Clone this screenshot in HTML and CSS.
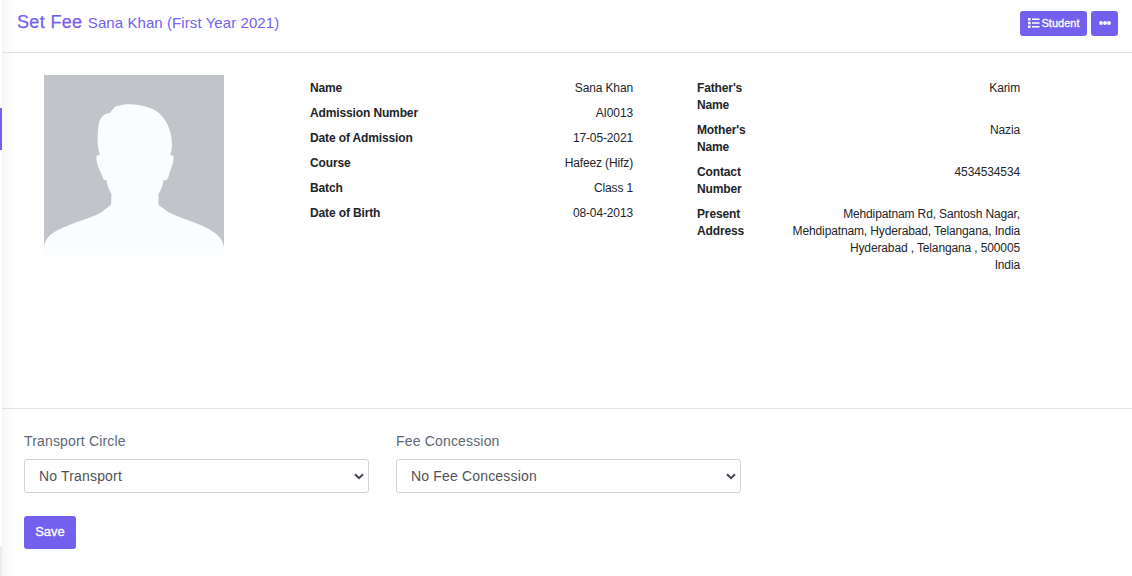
FILE: index.html
```html
<!DOCTYPE html>
<html lang="en">
<head>
<meta charset="utf-8">
<title>Set Fee</title>
<link rel="stylesheet" href="styles.css">
</head>
<body>
<div class="layout">
  <aside class="rail"><div class="rail-active"></div><div class="rail-foot"></div></aside>
  <main class="page">
    <header class="page-header">
      <h1 class="title">Set Fee <small class="subtitle">Sana Khan (First Year 2021)</small></h1>
      <div class="actions">
        <button class="btn btn-sm btn-student"><svg class="icon-list" viewBox="0 0 12 10"><path fill="#fff" d="M0 0h2.600v2.400H0zM0 3.800h2.600v2.400H0zM0 7.600h2.600v2.400H0zM4 .4h7.500v1.600H4zM4 4.200h7.500v1.600H4zM4 8h7.500v1.600H4z"/></svg><span>Student</span></button>
        <button class="btn btn-sm btn-more" aria-label="More"><svg class="icon-dots" viewBox="0 0 12 4"><circle cx="2" cy="2" r="1.9" fill="#fff"/><circle cx="6" cy="2" r="1.9" fill="#fff"/><circle cx="10" cy="2" r="1.9" fill="#fff"/></svg></button>
      </div>
    </header>
    <section class="profile">
      <svg class="avatar" viewBox="0 0 180 180">
        <rect width="180" height="180" fill="#c1c5ca"/>
        <path fill="#fbfcfe" d="M0 180V172C1 164 6 159 14 155C30 147 48 143 58 137C61 134 64 132 67 130L67.500 119C65 115 63 110 62.500 105C60 106 58.500 103 57.500 99C55 94 52 88 52.500 82C52.500 80 54 80 56 80C53 72 53 58 55 48C56 43 60 38 66 38C69 34 72 30 75 31C80 28 96 29 106 33C120 38 128 53 128 70C128 74 127 78 126 80C129 80 130 81 129.500 85C129 90 126 95 125 100C124 104 123 106 119.500 105C119 110 117 115 114.500 119L114.500 130C118 132 121 135 124 137C138 144 158 149 168 156C176 161 179 166 180 172V180Z"/>
      </svg>
      <dl class="details details-student">
        <div class="row"><dt>Name</dt><dd>Sana Khan</dd></div>
        <div class="row"><dt>Admission Number</dt><dd>AI0013</dd></div>
        <div class="row"><dt>Date of Admission</dt><dd>17-05-2021</dd></div>
        <div class="row"><dt>Course</dt><dd>Hafeez (Hifz)</dd></div>
        <div class="row"><dt>Batch</dt><dd>Class 1</dd></div>
        <div class="row"><dt>Date of Birth</dt><dd>08-04-2013</dd></div>
      </dl>
      <dl class="details">
        <div class="row"><dt>Father's<br>Name</dt><dd>Karim</dd></div>
        <div class="row"><dt>Mother's<br>Name</dt><dd>Nazia</dd></div>
        <div class="row"><dt>Contact<br>Number</dt><dd>4534534534</dd></div>
        <div class="row"><dt>Present<br>Address</dt><dd>Mehdipatnam Rd, Santosh Nagar,<br>Mehdipatnam, Hyderabad, Telangana, India<br>Hyderabad , Telangana , 500005<br>India</dd></div>
      </dl>
    </section>
    <form class="fee-form">
      <div class="fields">
        <label class="field"><span>Transport Circle</span>
          <span class="select"><span>No Transport</span><svg class="chevron" viewBox="0 0 10 7"><path d="M1 1.200L5 5.200L9 1.200" fill="none" stroke="#40474f" stroke-width="2"/></svg></span></label>
        <label class="field"><span>Fee Concession</span>
          <span class="select"><span>No Fee Concession</span><svg class="chevron" viewBox="0 0 10 7"><path d="M1 1.200L5 5.200L9 1.200" fill="none" stroke="#40474f" stroke-width="2"/></svg></span></label>
      </div>
      <button class="btn btn-save" type="button">Save</button>
    </form>
  </main>
</div>
</body>
</html>
```
FILE: styles.css
```css
* { box-sizing: border-box; }
body { margin: 0; background: #fff; color: #212529; font: 12px/17px "Liberation Sans", Arial, sans-serif; overflow: hidden; }
.layout { display: flex; height: 576px; }
.rail { width: 2px; display: flex; flex-direction: column; justify-content: space-between; padding-top: 108px; }
.rail-active { height: 42px; background: #7460ee; }
.rail-foot { height: 30px; background: #e9edf2; }
.page { flex: 1; background: linear-gradient(to right, #f7f7f7, #fff 14px); }
.page-header { height: 53px; padding: 11px 14px 0 15px; display: flex; justify-content: space-between; align-items: flex-start; border-bottom: 1px solid #dee0e2; }
.title { margin: 0; font-size: 18px; line-height: 22px; font-weight: 400; letter-spacing: .35px; color: #7460ee; white-space: nowrap; -webkit-text-stroke: .25px #7460ee; }
.subtitle { font-size: 15px; letter-spacing: .08px; -webkit-text-stroke: 0; }
.actions { display: flex; gap: 4px; }
.btn { border: 0; border-radius: 3px; background: #7460ee; color: #fff; font-family: inherit; padding: 0; -webkit-text-stroke: .3px #fff; }
.btn-sm { height: 25px; display: flex; align-items: center; justify-content: center; font-size: 11px; padding-bottom: 1px; }
.btn-student { width: 67px; gap: 2px; }
.btn-more { width: 27px; }
.icon-list { width: 12px; height: 10px; }
.icon-dots { width: 12px; height: 4px; }
.profile { height: 356px; padding: 22px 0 0 42px; display: flex; align-items: flex-start; border-bottom: 1px solid #dee0e2; }
.avatar { width: 180px; height: 180px; display: block; margin-right: 86px; }
.details { width: 323px; margin: 5px 0 0; display: grid; gap: 8px; letter-spacing: -.13px; }
.details-student { margin-right: 64px; }
.row { display: flex; justify-content: space-between; }
dt { font-weight: 700; }
dd { margin: 0; text-align: right; white-space: nowrap; }
.fee-form { padding: 22px 0 0 22px; font-size: 14px; }
.fields { display: flex; gap: 27px; }
.field { width: 345px; display: flex; flex-direction: column; gap: 8px; line-height: 20px; letter-spacing: .17px; color: #5b6777; }
.select { height: 34px; border: 1px solid #ced1d6; border-radius: 3px; background: #fff; padding: 0 4px 0 14px; display: flex; align-items: center; justify-content: space-between; color: #4f5358; }
.chevron { width: 10px; height: 7px; }
.btn-save { margin-top: 23px; width: 52px; height: 33px; font-size: 13px; display: block; padding-bottom: 2px; }
```
